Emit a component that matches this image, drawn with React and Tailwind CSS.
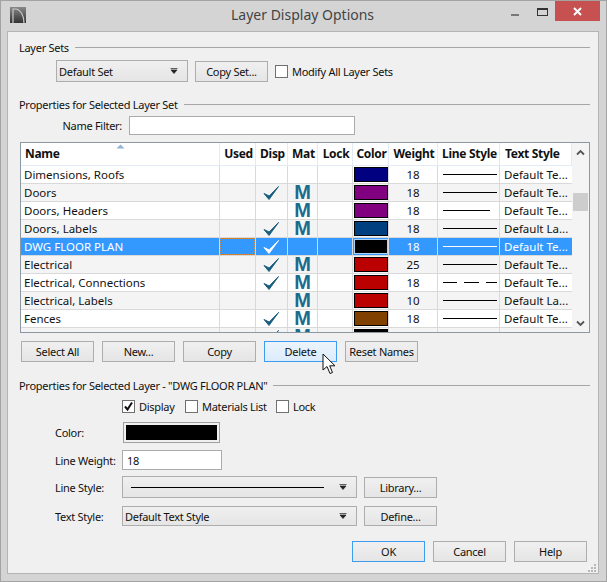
import React from 'react';

const rows = [
    { name: 'Dimensions, Roofs', disp: false, mat: false, color: 'bg-[#000080]', weight: '18', line: 'full', text: 'Default Te...' },
    { name: 'Doors', disp: true, mat: true, color: 'bg-[#800080]', weight: '18', line: 'full', text: 'Default Te...' },
    { name: 'Doors, Headers', disp: false, mat: true, color: 'bg-[#800080]', weight: '18', line: 'short', text: 'Default Te...' },
    { name: 'Doors, Labels', disp: true, mat: true, color: 'bg-[#004080]', weight: '18', line: 'full', text: 'Default La...' },
    { name: 'DWG FLOOR PLAN', disp: true, mat: false, color: 'bg-black', weight: '18', line: 'full', text: 'Default Te...', selected: true },
    { name: 'Electrical', disp: true, mat: true, color: 'bg-[#bb0000]', weight: '25', line: 'full', text: 'Default Te...' },
    { name: 'Electrical, Connections', disp: true, mat: true, color: 'bg-[#bb0000]', weight: '18', line: 'dash', text: 'Default Te...' },
    { name: 'Electrical, Labels', disp: false, mat: true, color: 'bg-[#bb0000]', weight: '10', line: 'full', text: 'Default La...' },
    { name: 'Fences', disp: true, mat: true, color: 'bg-[#804000]', weight: '18', line: 'full', text: 'Default Te...' },
    { name: 'Flooring', disp: true, mat: true, color: 'bg-black', weight: '20', line: 'full', text: 'Default Te...' },
];

const gridCols = 'grid grid-cols-[199px_36px_32px_30px_35px_36px_49px_62px_72px]';
const btn = 'flex items-center justify-center border border-[#adadad] bg-gradient-to-b from-[#f0f0f0] to-[#e5e5e5] text-[#111]';
const btnBlue = 'flex items-center justify-center border border-[#3e9cf0] bg-gradient-to-b from-[#ecf4fc] to-[#dcecfc] text-[#111]';

const CheckMark = ({ color }) => (
    <svg width="17" height="16" viewBox="0 0 17 16">
        <path d="M1 8.5 L6 14.5 L15.5 1.5 L6.2 11 Z" fill={color} stroke={color} strokeWidth="1" strokeLinejoin="round" />
    </svg>
);

const DropArrow = () => (
    <svg width="8" height="6" viewBox="0 0 8 6">
        <path d="M0.5 0.5 H7.5 M1 2 H7 L4 5.5 Z" fill="#222" stroke="#222" strokeWidth="0.7" />
    </svg>
);

const Section = ({ title, className }) => (
    <div className={`flex h-4 items-center gap-[6px] pl-[11px] pr-2 ${className}`}>
        <span className="whitespace-nowrap">{title}</span>
        <div className="h-px flex-1 bg-[#a6a6a6]" />
    </div>
);

const Checkbox = ({ checked }) => (
    <div className="flex h-[13px] w-[13px] shrink-0 items-center justify-center border border-[#707070] bg-white">
        {checked && (
            <svg width="11" height="11" viewBox="0 0 11 11">
                <path d="M2 5.5 L4.5 8.5 L9 1.5" fill="none" stroke="#111" strokeWidth="2" />
            </svg>
        )}
    </div>
);

const Select = ({ className, children }) => (
    <div className={`flex items-center justify-between border border-[#adadad] bg-gradient-to-b from-[#f0f0f0] to-[#e5e5e5] pl-[2px] pr-[9px] ${className}`}>
        {children}
        <DropArrow />
    </div>
);

const LineSample = ({ type, selected }) => {
    const bar = selected ? 'bg-white' : 'bg-black';
    if (type === 'dash') {
        return (
            <div className="flex w-[54px] justify-between">
                <div className={`h-px w-[14px] ${bar}`} />
                <div className={`h-px w-[15px] ${bar}`} />
                <div className={`h-px w-[11px] ${bar}`} />
            </div>
        );
    }
    return <div className={`h-px ${type === 'short' ? 'w-[47px]' : 'w-[54px]'} ${bar}`} />;
};

const LayerRow = ({ row, index }) => {
    const cell = 'flex h-[18px] items-center border-b border-r border-[#d9d9d9]';
    const bg = row.selected ? 'bg-[#3399ff] text-white' : index % 2 ? 'bg-[#f4f4f4]' : 'bg-white';
    return (
        <div className={`${gridCols} ${bg}`}>
            <div className={`${cell} pl-[3px]`}>{row.name}</div>
            <div className={cell}>
                {row.selected && <div className="h-[17px] w-full border border-dotted border-[#d98a3a]" />}
            </div>
            <div className={`${cell} justify-center`}>
                {row.disp && <CheckMark color={row.selected ? '#ffffff' : '#1a5f7f'} />}
            </div>
            <div className={`${cell} justify-center text-[20px] leading-[17px] font-bold text-[#1b6c8e] font-['Liberation_Sans',sans-serif]`}>
                {row.mat && 'M'}
            </div>
            <div className={cell} />
            <div className={`${cell} justify-center`}>
                <div className={`h-[15px] w-[34px] border-[1.5px] ${row.selected ? 'border-[#a9d3f8]' : 'border-black'} ${row.color}`} />
            </div>
            <div className={`${cell} justify-center`}>{row.weight}</div>
            <div className={`${cell} pl-[5px]`}>
                <LineSample type={row.line} selected={row.selected} />
            </div>
            <div className={`${cell} whitespace-nowrap border-r-0 pl-[4px]`}>{row.text}</div>
        </div>
    );
};

const App = () => {
    return (
        <div className="relative flex h-[582px] w-[607px] flex-col overflow-hidden border border-[#a3a3a3] bg-[#d4d4d4] text-[11px] leading-none tracking-[-0.28px] text-[#111] font-['Noto_Sans',sans-serif]">
            {/* title bar */}
            <div className="flex h-[30px] shrink-0 items-start">
                <div className="ml-[9px] mt-[6px] h-4 w-4 shrink-0 bg-gradient-to-b from-[#8a8a8a] to-[#333]">
                    <svg width="16" height="16" viewBox="0 0 16 16">
                        <path d="M3 16 V2 H6 C11 3 14 9 14 16" fill="none" stroke="#c8c8c8" strokeWidth="1.2" />
                    </svg>
                </div>
                <div className="ml-[205px] mt-[7px] whitespace-nowrap text-[14px] tracking-normal text-[#444]">Layer Display Options</div>
                <div className="ml-auto flex">
                    <div className="mt-[13px] mr-[18px] h-[2px] w-2 bg-[#777]" />
                    <div className="mt-[7px] mr-[7px] h-[8px] w-[11px] border border-t-2 border-[#333]" />
                    <div className="flex h-5 w-[45px] items-center justify-center bg-[#c75050]">
                        <svg width="9" height="9" viewBox="0 0 9 9">
                            <path d="M1 1 L8 8 M8 1 L1 8" stroke="#fff" strokeWidth="2" />
                        </svg>
                    </div>
                    <div className="w-[6px]" />
                </div>
            </div>

            {/* main panel */}
            <div className="relative ml-[6px] h-[543px] w-[592px] border border-[#b4b4b4] bg-[#f0f0f0]">
                <Section title="Layer Sets" className="mt-[7px]" />
                <div className="ml-[48px] mt-[5px] flex h-[22px] items-center">
                    <Select className="h-[22px] w-[132px]">Default Set</Select>
                    <div className={`${btn} ml-[7px] h-[21px] w-[73px]`}>Copy Set...</div>
                    <div className="ml-[7px]"><Checkbox /></div>
                    <span className="ml-[4px]">Modify All Layer Sets</span>
                </div>

                <Section title="Properties for Selected Layer Set" className="mt-[14px]" />
                <div className="mt-[4px] flex h-[19px] items-center">
                    <div className="w-[114px] text-right">Name Filter:</div>
                    <div className="ml-[7px] h-[19px] w-[226px] border border-[#ababab] bg-white" />
                </div>

                {/* layer table */}
                <div className="ml-[12px] mt-[7px] flex h-[191px] w-[570px] overflow-hidden border border-[#8d98a5] bg-white text-[11.5px] tracking-normal">
                    <div className="w-[551px] shrink-0 overflow-hidden">
                        <div className={`${gridCols} relative h-[23px] text-[12px] font-bold tracking-[-0.3px]`}>
                            {['Name', 'Used', 'Disp', 'Mat', 'Lock', 'Color', 'Weight', 'Line Style', 'Text Style'].map((col, i) => (
                                <div key={col} className={`flex items-center whitespace-nowrap border-b border-r border-[#e3ecf5] ${i === 0 ? 'pl-[4px]' : i === 8 ? 'pl-[5px]' : 'justify-center pl-[2px]'}`}>
                                    {col}
                                </div>
                            ))}
                            <svg className="absolute left-[95px] top-[1px]" width="9" height="5" viewBox="0 0 9 5">
                                <path d="M0.5 4.5 L4.5 0.5 L8.5 4.5 Z" fill="#8fb4d4" />
                            </svg>
                        </div>
                        {rows.map((row, i) => (
                            <LayerRow key={row.name} row={row} index={i} />
                        ))}
                    </div>
                    <div className="flex flex-1 flex-col items-center bg-[#f4f4f4]">
                        <svg className="mt-[6px]" width="9" height="7" viewBox="0 0 9 7">
                            <path d="M1 5.5 L4.5 2 L8 5.5" fill="none" stroke="#555" strokeWidth="1.8" />
                        </svg>
                        <div className="mt-[37px] h-[18px] w-[15px] bg-[#cdcdcd]" />
                        <svg className="mt-[109px]" width="9" height="7" viewBox="0 0 9 7">
                            <path d="M1 1.5 L4.5 5 L8 1.5" fill="none" stroke="#555" strokeWidth="1.8" />
                        </svg>
                    </div>
                </div>

                <div className="ml-[13px] mt-[8px] flex h-[21px] gap-2">
                    <div className={`${btn} w-[73px]`}>Select All</div>
                    <div className={`${btn} w-[73px]`}>New...</div>
                    <div className={`${btn} w-[73px]`}>Copy</div>
                    <div className={`${btnBlue} w-[73px]`}>Delete</div>
                    <div className={`${btn} w-[73px]`}>Reset Names</div>
                </div>

                <Section title={'Properties for Selected Layer - "DWG FLOOR PLAN"'} className="mt-[15px]" />

                <div className="ml-[114px] mt-[5px] flex h-4 items-center">
                    <div className="flex w-[63px] items-center gap-1"><Checkbox checked />Display</div>
                    <div className="flex w-[91px] items-center gap-1"><Checkbox />Materials List</div>
                    <div className="flex items-center gap-1"><Checkbox />Lock</div>
                </div>

                <div className="ml-[47px] mt-[8px] flex h-[21px] items-center">
                    <div className="w-[68px]">Color:</div>
                    <div className="h-[21px] w-[97px] border border-[#a0a0a0] p-[2px]">
                        <div className="h-full w-full bg-black" />
                    </div>
                </div>

                <div className="ml-[47px] mt-[7px] flex h-5 items-center">
                    <div className="w-[67px]">Line Weight:</div>
                    <div className="flex h-5 w-[100px] items-center border border-[#ababab] bg-white pl-[4px]">18</div>
                </div>

                <div className="ml-[47px] mt-[6px] flex h-[22px] items-center">
                    <div className="w-[67px]">Line Style:</div>
                    <Select className="h-[22px] w-[235px] !pl-[8px]">
                        <div className="h-px w-[193px] bg-black" />
                    </Select>
                    <div className={`${btn} ml-[7px] h-[21px] w-[73px]`}>Library...</div>
                </div>

                <div className="ml-[47px] mt-[8px] flex h-5 items-center">
                    <div className="w-[67px]">Text Style:</div>
                    <Select className="h-5 w-[235px]">Default Text Style</Select>
                    <div className={`${btn} ml-[7px] h-5 w-[73px]`}>Define...</div>
                </div>

                <div className="ml-[344px] mt-[15px] flex h-[21px] gap-2">
                    <div className={`${btn} w-[73px] !border-[#3e9cf0]`}>OK</div>
                    <div className={`${btn} w-[73px]`}>Cancel</div>
                    <div className={`${btn} w-[73px]`}>Help</div>
                </div>

                {/* resize grip */}
                <svg className="absolute bottom-[1px] right-[2px]" width="9" height="9" viewBox="0 0 9 9">
                    <path d="M7 1h2v2H7z M4 4h2v2H4z M7 4h2v2H7z M1 7h2v2H1z M4 7h2v2H4z M7 7h2v2H7z" fill="#b8b8b8" />
                </svg>
            </div>

            {/* mouse pointer over the Delete button */}
            <svg className="absolute left-[321px] top-[352px]" width="15" height="22" viewBox="0 0 15 22">
                <path d="M1 1 V17 L5 13.5 L8 20.5 L10.5 19.5 L7.7 12.8 L13 12.8 Z" fill="#fff" stroke="#111" strokeWidth="1" strokeLinejoin="round" />
            </svg>
        </div>
    );
};

export default App;
